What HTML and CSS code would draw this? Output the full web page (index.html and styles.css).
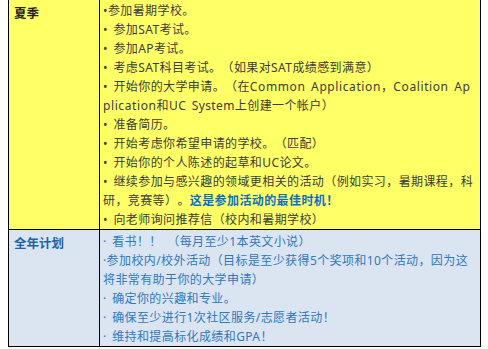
FILE: index.html
```html
<!DOCTYPE html>
<html lang="zh">
<head>
<meta charset="utf-8">
<link rel="stylesheet" href="styles.css">
</head>
<body>
<table class="plan">
  <colgroup>
    <col class="col-label">
    <col class="col-items">
  </colgroup>
  <tr class="row-summer">
    <th class="label">夏季</th>
    <td class="items">
      <p>•参加暑期学校。</p>
      <p>• 参加SAT考试。</p>
      <p>• 参加AP考试。</p>
      <p>• 考虑SAT科目考试。（如果对SAT成绩感到满意）</p>
      <p>• 开始你的大学申请。（在<span lang="en">Common Application</span>，<span lang="en">Coalition Ap<br>plication</span>和UC System上创建一个帐户）</p>
      <p>• 准备简历。</p>
      <p>• 开始考虑你希望申请的学校。（匹配）</p>
      <p>• 开始你的个人陈述的起草和UC论文。</p>
      <p>• 继续参加与感兴趣的领域更相关的活动（例如实习，暑期课程，科<br>研，竞赛等）。<strong class="hl">这是参加活动的最佳时机！</strong></p>
      <p>• 向老师询问推荐信（校内和暑期学校）</p>
    </td>
  </tr>
  <tr class="row-year">
    <th class="label">全年计划</th>
    <td class="items">
      <p>· 看书！！ （每月至少1本英文小说）</p>
      <p>·参加校内/校外活动（目标是至少获得5个奖项和10个活动，因为这<br>将非常有助于你的大学申请）</p>
      <p>· 确定你的兴趣和专业。</p>
      <p>· 确保至少进行1次社区服务/志愿者活动！</p>
      <p>· 维持和提高标化成绩和GPA！</p>
    </td>
  </tr>
</table>
</body>
</html>
```
FILE: styles.css
```css
html, body {
  margin: 0;
  padding: 0;
  background: #ffffff;
}
body {
  padding: 0 8px;
  font-family: "Noto Sans", "Noto Sans CJK SC", sans-serif;
  font-size: 12px;
}
.plan {
  border-collapse: collapse;
  width: 473px;
  table-layout: fixed;
}
.col-label {
  width: 91px;
}
.plan th, .plan td {
  border: 1px solid #000;
  vertical-align: top;
  text-align: left;
}
.plan tr:first-child th, .plan tr:first-child td {
  border-top: none;
}
.label {
  padding: 3px 5px 0 5px;
  font-family: "Noto Sans CJK SC", sans-serif;
  font-weight: bold;
  font-size: 12.5px;
  line-height: 19px;
}
.items {
  padding: 1px 0 0 3px;
  line-height: 19px;
  letter-spacing: 0.4px;
  word-spacing: 2px;
  word-break: break-all;
  text-spacing-trim: space-all;
}
.items p {
  margin: 0;
}
.items [lang="en"] {
  letter-spacing: 0.6px;
}
.row-summer th, .row-summer td {
  background: #ffff66;
}
.row-summer .label {
  color: #222;
}
.row-summer .items {
  color: #3c3c3c;
}
.hl {
  color: #0a6fc4;
}
.row-year th, .row-year td {
  background: #dbe5f1;
}
.row-year .label {
  color: #1e63a8;
}
.row-year .items {
  color: #2f78c0;
  padding-top: 2px;
}
```
